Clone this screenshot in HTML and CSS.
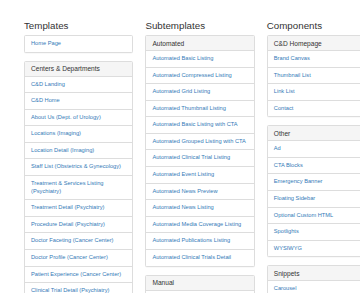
FILE: index.html
```html
<!DOCTYPE html>
<html>
<head>
<meta charset="utf-8">
<link rel="stylesheet" href="styles.css">
</head>
<body>
<div class="page">
  <div class="col">
    <h3 class="title">Templates</h3>
    <div class="panel">
      <ul class="list">
        <li><a href="#">Home Page</a></li>
      </ul>
    </div>
    <div class="panel">
      <div class="panel-heading">Centers &amp; Departments</div>
      <ul class="list">
        <li><a href="#">C&amp;D Landing</a></li>
        <li><a href="#">C&amp;D Home</a></li>
        <li><a href="#">About Us (Dept. of Urology)</a></li>
        <li><a href="#">Locations (Imaging)</a></li>
        <li><a href="#">Location Detail (Imaging)</a></li>
        <li><a href="#">Staff List (Obstetrics &amp; Gynecology)</a></li>
        <li><a href="#">Treatment &amp; Services Listing (Psychiatry)</a></li>
        <li><a href="#">Treatment Detail (Psychiatry)</a></li>
        <li><a href="#">Procedure Detail (Psychiatry)</a></li>
        <li><a href="#">Doctor Faceting (Cancer Center)</a></li>
        <li><a href="#">Doctor Profile (Cancer Center)</a></li>
        <li><a href="#">Patient Experience (Cancer Center)</a></li>
        <li><a href="#">Clinical Trial Detail (Psychiatry)</a></li>
        <li><a href="#">Clinical Trial Listing (Psychiatry)</a></li>
      </ul>
    </div>
  </div>
  <div class="col">
    <h3 class="title">Subtemplates</h3>
    <div class="panel">
      <div class="panel-heading">Automated</div>
      <ul class="list">
        <li><a href="#">Automated Basic Listing</a></li>
        <li><a href="#">Automated Compressed Listing</a></li>
        <li><a href="#">Automated Grid Listing</a></li>
        <li><a href="#">Automated Thumbnail Listing</a></li>
        <li><a href="#">Automated Basic Listing with CTA</a></li>
        <li><a href="#">Automated Grouped Listing with CTA</a></li>
        <li><a href="#">Automated Clinical Trial Listing</a></li>
        <li><a href="#">Automated Event Listing</a></li>
        <li><a href="#">Automated News Preview</a></li>
        <li><a href="#">Automated News Listing</a></li>
        <li><a href="#">Automated Media Coverage Listing</a></li>
        <li><a href="#">Automated Publications Listing</a></li>
        <li><a href="#">Automated Clinical Trials Detail</a></li>
      </ul>
    </div>
    <div class="panel">
      <div class="panel-heading">Manual</div>
      <ul class="list">
        <li><a href="#">Manual Listing</a></li>
      </ul>
    </div>
  </div>
  <div class="col">
    <h3 class="title">Components</h3>
    <div class="panel">
      <div class="panel-heading">C&amp;D Homepage</div>
      <ul class="list">
        <li><a href="#">Brand Canvas</a></li>
        <li><a href="#">Thumbnail List</a></li>
        <li><a href="#">Link List</a></li>
        <li><a href="#">Contact</a></li>
      </ul>
    </div>
    <div class="panel">
      <div class="panel-heading">Other</div>
      <ul class="list">
        <li><a href="#">Ad</a></li>
        <li><a href="#">CTA Blocks</a></li>
        <li><a href="#">Emergency Banner</a></li>
        <li><a href="#">Floating Sidebar</a></li>
        <li><a href="#">Optional Custom HTML</a></li>
        <li><a href="#">Spotlights</a></li>
        <li><a href="#">WYSIWYG</a></li>
      </ul>
    </div>
    <div class="panel">
      <div class="panel-heading">Snippets</div>
      <ul class="list">
        <li><a href="#">Carousel</a></li>
        <li><a href="#">Accordion</a></li>
      </ul>
    </div>
  </div>
</div>
</body>
</html>
```
FILE: styles.css
```css
html, body {
  margin: 0;
  padding: 0;
  overflow: hidden;
  background: #fff;
}
body {
  font-family: "Liberation Sans", Arial, Helvetica, sans-serif;
  color: #333;
}
.page {
  display: grid;
  grid-template-columns: 109.3px 109.3px 109.3px;
  column-gap: 12.1px;
  padding: 20px 0 0 24px;
  width: 400px;
  align-items: start;
}
.col {
  display: flex;
  flex-direction: column;
}
.title {
  margin: 0 0 4px 0;
  font-size: 9.76px;
  line-height: 11px;
  font-weight: 500;
  color: #333;
}
.panel {
  border: 1px solid #ddd;
  border-radius: 1.6px;
  background: #fff;
  box-shadow: 0 0.4px 0.4px rgba(0, 0, 0, 0.05);
  margin-bottom: 8px;
  overflow: hidden;
}
.panel-heading {
  background: #f5f5f5;
  border-bottom: 1px solid #ddd;
  padding: 3.5px 6px;
  font-size: 6.6px;
  line-height: 7px;
  color: #333;
}
.list {
  list-style: none;
  margin: 0;
  padding: 0;
}
.list li {
  padding: 4px 6px;
  font-size: 5.7px;
  line-height: 7.58px;
  border-top: 1px solid #ddd;
}
.list li:first-child {
  border-top: 0;
}
.list a {
  color: #337ab7;
  text-decoration: none;
}
```
